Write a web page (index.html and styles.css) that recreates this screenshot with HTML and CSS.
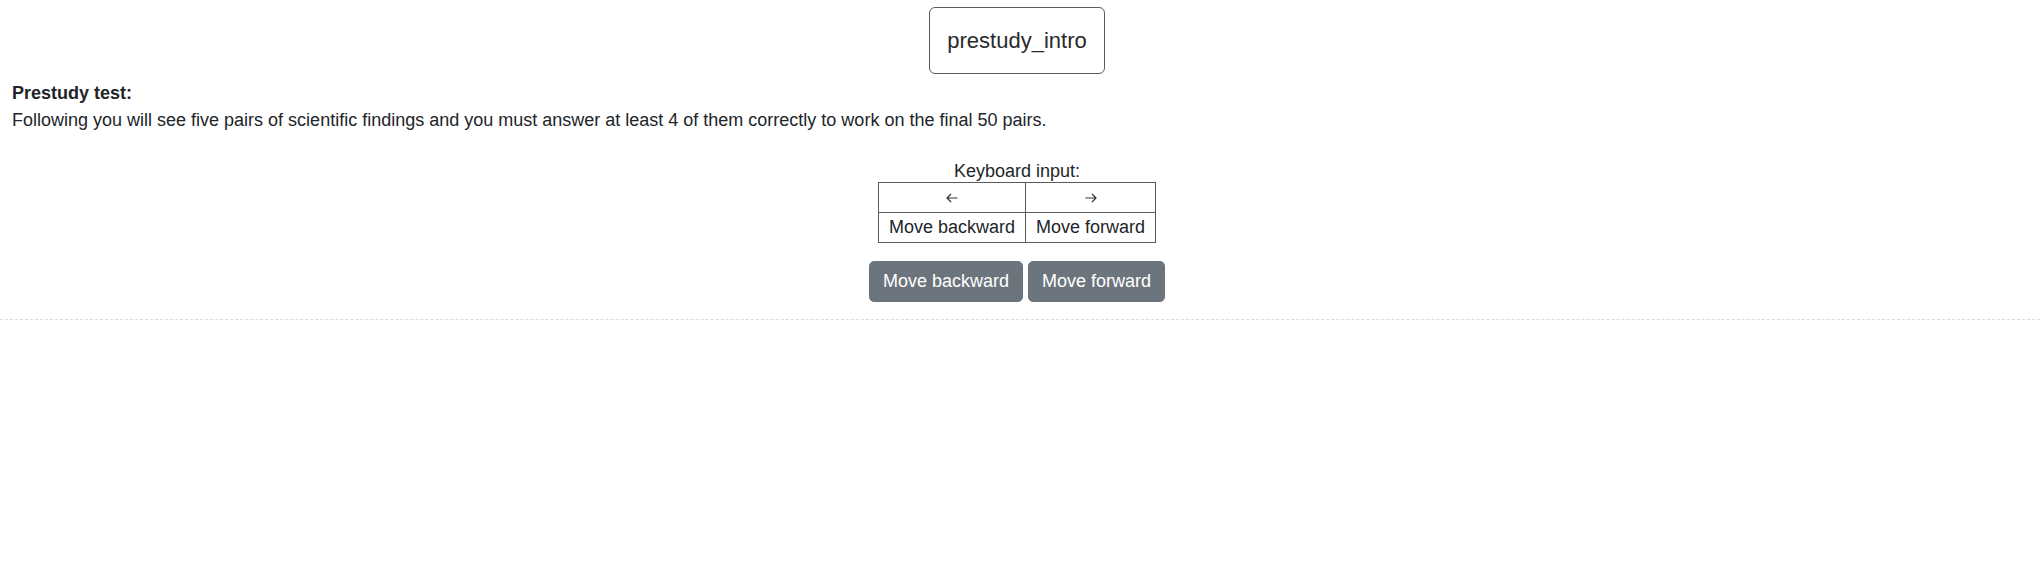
FILE: index.html
```html
<!DOCTYPE html>
<html lang="en">
<head>
<meta charset="utf-8">
<title>prestudy_intro</title>
<link rel="stylesheet" href="styles.css">
</head>
<body>
<div class="page">
  <div class="header">
    <div class="title-box">prestudy_intro</div>
  </div>
  <div class="intro">
    <strong>Prestudy test:</strong><br>
    Following you will see five pairs of scientific findings and you must answer at least 4 of them correctly to work on the final 50 pairs.
  </div>
  <div class="keys">
    <table class="key-table">
      <caption>Keyboard input:</caption>
      <tbody>
        <tr>
          <td><svg class="arrow" width="12" height="10" viewBox="0 0 12 10" aria-label="←"><path d="M11.5 5H1M5 1L1 5l4 4" fill="none" stroke="#333" stroke-width="1.2"/></svg></td>
          <td><svg class="arrow" width="12" height="10" viewBox="0 0 12 10" aria-label="→"><path d="M0.5 5H11M7 1l4 4-4 4" fill="none" stroke="#333" stroke-width="1.2"/></svg></td>
        </tr>
        <tr><td>Move backward</td><td>Move forward</td></tr>
      </tbody>
    </table>
  </div>
  <div class="nav">
    <button class="btn" type="button">Move backward</button>
    <button class="btn" type="button">Move forward</button>
  </div>
</div>
</body>
</html>
```
FILE: styles.css
```css
html, body {
  margin: 0;
  padding: 0;
  background: #fff;
}

body {
  font-family: "Liberation Sans", Arial, Helvetica, sans-serif;
  font-size: 18px;
  line-height: 27px;
  color: #212529;
}

.page {
  padding: 0 18px 17px 12px;
  border-bottom: 1px dashed #dcdcdc;
}

.header {
  display: flex;
  justify-content: center;
  padding-top: 7px;
}

.title-box {
  border: 1px solid #5a5a5a;
  border-radius: 6px;
  padding: 0 17px;
  height: 65px;
  line-height: 66px;
  font-size: 22px;
  color: #2a2a2a;
}

.intro {
  margin-top: 6px;
}

.intro strong {
  font-weight: 700;
}

.keys {
  margin-top: 26px;
  display: flex;
  justify-content: center;
}

.key-table {
  border-collapse: collapse;
}

.key-table caption {
  caption-side: top;
  text-align: center;
  padding: 0;
  line-height: 22px;
}

.key-table td {
  border: 1px solid #5a5a5a;
  padding: 1px 10px;
  height: 27px;
  line-height: 27px;
  text-align: center;
}

.arrow {
  display: inline-block;
  vertical-align: middle;
}

.nav {
  margin-top: 18px;
  display: flex;
  justify-content: center;
  gap: 5px;
}

.btn {
  font-family: "Liberation Sans", Arial, Helvetica, sans-serif;
  font-size: 18px;
  line-height: 27px;
  padding: 6px 13px;
  color: #fff;
  background: #6c757d;
  border: 1px solid #6c757d;
  border-radius: 5px;
  cursor: pointer;
}
```
